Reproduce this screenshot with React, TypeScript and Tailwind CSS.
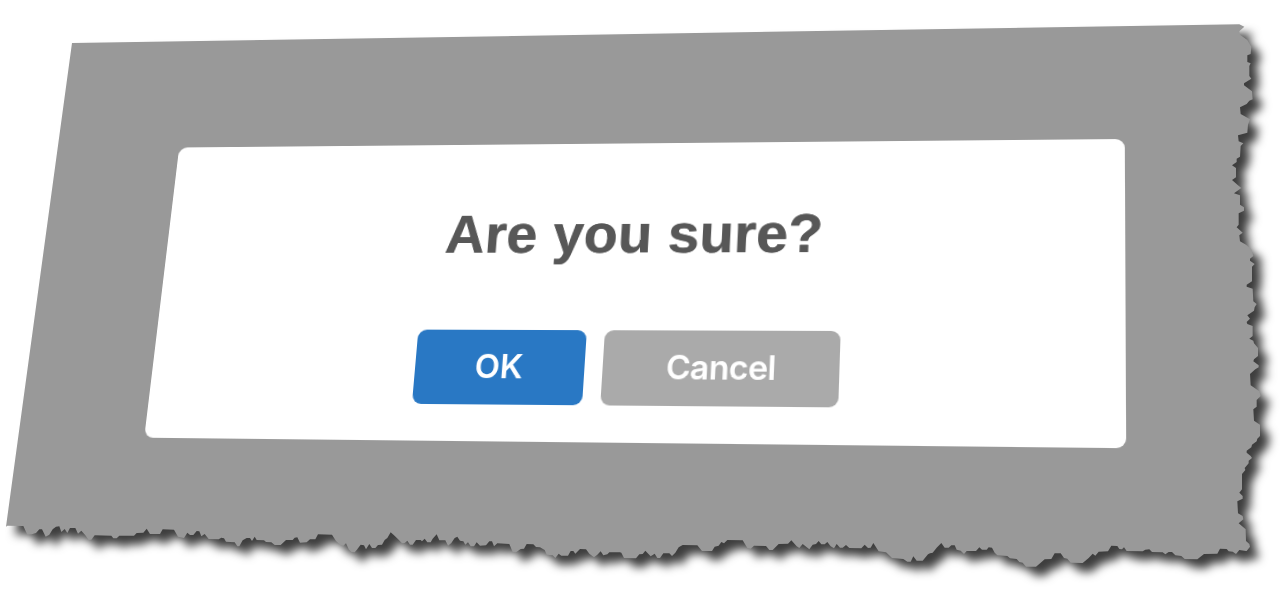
import React from "react";

type Point = [number, number];

/** Outline strips of the torn edge; points are thirds of a pixel from the strip's origin. */
const TORN_EDGE: { x: number; y: number; points: string }[] = [
  {
    x: 0,
    y: 500,
    points:
      "18,80 22,77 70,78 82,104 95,103 108,99 118,88 126,88 137,110 148,104 158,88 168,80 178,79 184,96 194,87 202,99 210,84 226,84 234,101 244,92 256,106 266,120 274,119 284,106 334,107 340,115 350,115 358,107 402,107 410,99 430,98 440,86 450,102 480,102 488,88 522,89 534,110 552,114 562,98 570,105 580,105 590,93 598,94 604,109 614,102 626,117 656,118 664,113 672,115 678,125 704,127 712,139 718,139 728,121 740,114 750,114 756,123 764,110 770,120 792,121 798,126 814,127 824,135 842,135 858,120 878,120 884,113 892,112 900,128 920,127",
  },
  {
    x: 310,
    y: 500,
    points:
      "0,118 16,118 24,103 66,104 78,123 92,136 100,137 108,130 116,148 124,156 134,157 140,150 152,134 162,136 168,148 178,132 186,144 196,144 204,135 216,134 224,120 232,114 242,97 252,106 266,119 276,130 284,129 292,122 300,134 308,134 318,120 332,120 336,124 344,116 352,127 362,127 368,116 380,103 388,121 406,121 414,137 424,129 434,114 442,110 450,122 460,124 466,134 474,127 482,139 492,139 500,127 510,137 528,136 538,124 546,124 552,139 562,130 598,132 608,156 618,157 632,147 642,146 650,132 670,133 678,141 690,142 704,150 710,164 728,166 736,174 746,161 754,167 774,167 782,153 790,153 796,161 810,147 828,148 838,161 852,172 862,164 872,154 880,166 892,163 898,157 930,157",
  },
  {
    x: 620,
    y: 500,
    points:
      "4,158 12,174 48,175 58,163 68,162 76,152 92,169 104,161 112,174 120,174 130,160 148,160 156,168 166,158 176,142 188,135 232,136 246,153 276,153 284,140 296,137 304,126 312,130 322,120 368,121 382,144 392,146 402,137 438,138 448,150 458,150 476,132 504,131 514,121 530,139 538,144 548,132 568,148 578,134 588,132 596,123 604,133 614,133 622,126 632,139 642,145 650,132 660,143 668,143 678,135 688,144 724,145 734,134 744,144 752,143 760,129 776,154 798,157 816,174 850,177 862,185 872,185 880,169 890,182 908,182 924,163",
  },
  {
    x: 930,
    y: 500,
    points:
      "0,160 8,158 20,143 34,129 44,143 56,143 64,136 74,136 80,149 92,152 102,162 110,153 138,153 148,142 156,149 170,149 176,142 186,143 194,158 202,166 232,168 240,175 260,177 268,186 278,188 288,200 318,200 332,188 344,178 364,177 374,160 392,160 402,174 412,176 422,188 458,189 476,174 488,161 496,167 506,155 534,154 544,137 562,138 568,147 576,148 582,142 590,153 638,154 646,149 658,148 666,156 698,157 706,163 716,156 726,156 736,166 754,168 764,177 802,178 822,162 862,161 870,146 890,147 896,154 908,155 918,162 928,150 948,153",
  },
  {
    x: 1210,
    y: 370,
    points:
      "110,543 120,530 118,522 108,513 107,478 86,460 100,448 98,438 84,430 82,394 98,386 98,378 88,368 96,358 96,312 106,300 104,294 116,280 116,272 126,264 122,258 110,248 110,242 124,232 126,224 140,214 142,206 150,198 150,164 132,152 130,118 140,110 140,90 152,78 148,64 122,46 120,12",
  },
  {
    x: 1210,
    y: 190,
    points:
      "136,538 146,532 146,526 130,514 132,508 144,498 144,474 132,460 130,452 118,446 128,438 128,408 112,402 110,396 120,386 112,376 132,362 134,352 140,342 130,334 128,296 110,290 110,284 126,274 126,230 134,222 120,212 120,206 130,198 124,178 108,164 90,154 88,136 98,128 80,112 86,104 86,70 102,62 102,52 90,44 90,16",
  },
  {
    x: 1210,
    y: 10,
    points:
      "72,550 94,534 84,526 66,510 78,502 78,474 66,466 80,456 80,446 90,440 92,408 100,400 86,394 84,376 112,368 114,344 120,328 92,312 90,292 110,282 118,272 128,268 126,244 102,226 102,220 124,206 118,198 118,168 122,160 112,156 112,136 122,132 124,110 112,90 90,74 88,64 103,50 88,43",
  },
];

const sheetOutline = [
  "72,43",
  ...TORN_EDGE.flatMap(({ x, y, points }) =>
    points.split(" ").map((pair) => {
      const [px, py] = pair.split(",").map(Number);
      return `${(x + px / 3).toFixed(2)},${(y + py / 3).toFixed(2)}`;
    }),
  ),
].join(" ");

/** CSS matrix3d that maps a w×h box at the origin onto four corners (TL, TR, BR, BL). */
function perspective(w: number, h: number, [p0, p1, p2, p3]: [Point, Point, Point, Point]) {
  const dx1 = p1[0] - p2[0];
  const dy1 = p1[1] - p2[1];
  const dx2 = p3[0] - p2[0];
  const dy2 = p3[1] - p2[1];
  const sx = p0[0] - p1[0] + p2[0] - p3[0];
  const sy = p0[1] - p1[1] + p2[1] - p3[1];
  const det = dx1 * dy2 - dx2 * dy1;
  const g = (sx * dy2 - dx2 * sy) / det;
  const k = (dx1 * sy - sx * dy1) / det;
  const a = (p1[0] - p0[0] + g * p1[0]) / w;
  const d = (p1[1] - p0[1] + g * p1[1]) / w;
  const b = (p3[0] - p0[0] + k * p3[0]) / h;
  const e = (p3[1] - p0[1] + k * p3[1]) / h;
  const m = [a, d, 0, g / w, b, e, 0, k / h, 0, 0, 1, 0, p0[0], p0[1], 0, 1];
  return `matrix3d(${m.map((n) => n.toFixed(10)).join(",")})`;
}

const dialogTransform = perspective(960, 300, [
  [179.2, 147.5],
  [1124.8, 139],
  [1126.2, 448.2],
  [144.2, 437.7],
]);

function TornSheet() {
  return (
    <svg className="absolute inset-0 h-full w-full" viewBox="0 0 1286 592" aria-hidden="true">
      <defs>
        <filter id="sheet-shadow" x="0" y="0" width="1286" height="592" filterUnits="userSpaceOnUse" colorInterpolationFilters="sRGB">
          <feDropShadow dx="9" dy="9" stdDeviation="4.8" floodColor="#000" floodOpacity="0.76" />
        </filter>
      </defs>
      <polygon points={sheetOutline} fill="#999999" filter="url(#sheet-shadow)" />
    </svg>
  );
}

/* The padded wrapper keeps the dialog's slanted edges inside the layer, so they are smoothed. */
function ConfirmDialog() {
  return (
    <div
      className="relative w-[1000px] origin-top-left bg-[#999999]/1 p-5 will-change-transform"
      style={{ transform: `${dialogTransform} translate(-20px, -20px)` }}
    >
      <section
        role="dialog"
        aria-labelledby="confirm-title"
        className="flex h-[300px] w-[960px] flex-col items-center rounded-[9px] bg-white"
      >
        <h1
          id="confirm-title"
          className="mt-[61px] whitespace-nowrap font-['Liberation_Sans',Arial,sans-serif] text-[56px] leading-[64px] font-bold tracking-[0.2px] text-[#575757] [text-shadow:0.6px_0_0_#575757]"
        >
          Are you sure?
        </h1>
        <div className="mt-[64.5px] flex gap-[18px] font-[Inter,sans-serif] text-[33px] leading-none font-semibold text-white">
          <button className="h-[74px] w-[170px] rounded-[9px] bg-[#2978c4]">OK</button>
          <button className="h-[74px] w-[231px] rounded-[9px] bg-[#aaaaaa] pl-[2px] tracking-[-0.6px]">
            Cancel
          </button>
        </div>
      </section>
    </div>
  );
}

export default function App() {
  return (
    <main className="relative h-[592px] w-[1286px] overflow-hidden bg-white">
      <TornSheet />
      <ConfirmDialog />
    </main>
  );
}
